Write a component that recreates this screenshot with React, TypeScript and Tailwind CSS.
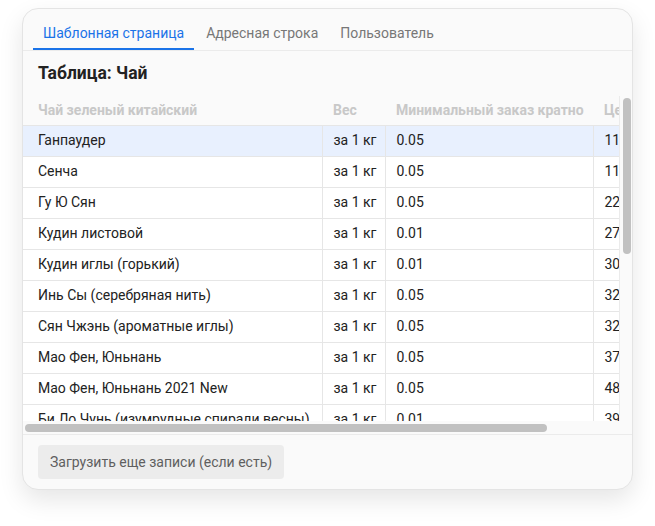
import { useState } from 'react'

type TeaRow = {
  name: string
  weight: string
  minOrder: string
  price: string
}

const rows: TeaRow[] = [
  { name: 'Ганпаудер', weight: 'за 1 кг', minOrder: '0.05', price: '1100' },
  { name: 'Сенча', weight: 'за 1 кг', minOrder: '0.05', price: '1150' },
  { name: 'Гу Ю Сян', weight: 'за 1 кг', minOrder: '0.05', price: '2200' },
  { name: 'Кудин листовой', weight: 'за 1 кг', minOrder: '0.01', price: '2700' },
  { name: 'Кудин иглы (горький)', weight: 'за 1 кг', minOrder: '0.01', price: '3000' },
  { name: 'Инь Сы (серебряная нить)', weight: 'за 1 кг', minOrder: '0.05', price: '3200' },
  { name: 'Сян Чжэнь (ароматные иглы)', weight: 'за 1 кг', minOrder: '0.05', price: '3250' },
  { name: 'Мао Фен, Юньнань', weight: 'за 1 кг', minOrder: '0.05', price: '3700' },
  { name: 'Мао Фен, Юньнань 2021 New', weight: 'за 1 кг', minOrder: '0.05', price: '4800' },
  { name: 'Би Ло Чунь (изумрудные спирали весны)', weight: 'за 1 кг', minOrder: '0.01', price: '3900' },
  { name: 'Лун Цзин (колодец дракона)', weight: 'за 1 кг', minOrder: '0.05', price: '5200' },
  { name: 'Тай Пин Хоу Куй', weight: 'за 1 кг', minOrder: '0.05', price: '6100' },
  { name: 'Хуан Шань Мао Фэн', weight: 'за 1 кг', minOrder: '0.05', price: '4300' },
  { name: 'Люань Гуа Пянь', weight: 'за 1 кг', minOrder: '0.05', price: '4700' },
  { name: 'Синь Ян Мао Цзянь', weight: 'за 1 кг', minOrder: '0.05', price: '3600' },
  { name: 'Чжу Е Цин', weight: 'за 1 кг', minOrder: '0.05', price: '5900' },
  { name: 'Ань Цзи Бай Ча', weight: 'за 1 кг', minOrder: '0.05', price: '6400' },
  { name: 'Моли Хуа Ча (жасминовый)', weight: 'за 1 кг', minOrder: '0.05', price: '2100' },
  { name: 'Жасминовые жемчужины', weight: 'за 1 кг', minOrder: '0.05', price: '4900' },
  { name: 'Цзюнь Шань Инь Чжэнь', weight: 'за 1 кг', minOrder: '0.01', price: '8800' }
]

const tabs = ['Шаблонная страница', 'Адресная строка', 'Пользователь']

export default function App() {
  const [activeTab, setActiveTab] = useState(0)
  const [selected, setSelected] = useState(0)

  return (
    <div className="w-[655px] h-[526px] bg-white pt-[8px] pl-[22px] font-['Roboto',sans-serif]">
      <div className="w-[611px] h-[482px] flex flex-col overflow-hidden rounded-[16px] border border-[#e4e4e4] bg-[#fafafa] shadow-[0_10px_24px_rgba(0,0,0,0.10)]">
        {/* Tabs */}
        <div className="flex gap-[2px] pl-[10px] pt-[8px] border-b border-[#ebebeb]">
          {tabs.map((tab, i) => (
            <button
              key={tab}
              onClick={() => setActiveTab(i)}
              className={`h-[33px] px-[10px] pt-[1px] text-[14px] border-b-2 ${
                activeTab === i
                  ? 'text-[#1a73e8] border-[#1a73e8]'
                  : 'text-[#777777] border-transparent'
              }`}
            >
              {tab}
            </button>
          ))}
        </div>

        <h2 className="pl-[15px] pt-[11px] pb-[12px] text-[17.5px] leading-[22px] font-bold text-[#222222]">
          Таблица: Чай
        </h2>

        {/* Table viewport with its scrollbars */}
        <div className="flex-1 min-h-0 grid grid-cols-[1fr_13px] grid-rows-[1fr_13px]">
          <div className="overflow-hidden">
            <table className="w-[676px] table-fixed border-collapse text-[14px]">
              <colgroup>
                <col className="w-[299px]" />
                <col className="w-[63px]" />
                <col className="w-[208px]" />
                <col className="w-[106px]" />
              </colgroup>
              <thead>
                <tr className="h-[29px] text-left text-[#c8c8c8]">
                  <th className="pl-[15px] pt-[1px] font-bold whitespace-nowrap">Чай зеленый китайский</th>
                  <th className="pl-[11px] pt-[1px] font-bold whitespace-nowrap">Вес</th>
                  <th className="pl-[11px] pt-[1px] font-bold whitespace-nowrap">Минимальный заказ кратно</th>
                  <th className="pl-[11px] pt-[1px] font-bold whitespace-nowrap">Цена, руб.</th>
                </tr>
              </thead>
              <tbody className="text-[#222222]">
                {rows.map((row, i) => (
                  <tr
                    key={row.name}
                    onClick={() => setSelected(i)}
                    className={`h-[31px] ${selected === i ? 'bg-[#e8f0fe]' : 'bg-white'}`}
                  >
                    <td className="pl-[15px] border-t border-r border-[#e6e6e6] whitespace-nowrap overflow-hidden">{row.name}</td>
                    <td className="pl-[11px] border-t border-r border-[#e6e6e6] whitespace-nowrap">{row.weight}</td>
                    <td className="pl-[11px] border-t border-r border-[#e6e6e6] whitespace-nowrap">{row.minOrder}</td>
                    <td className="pl-[11px] border-t border-[#e6e6e6] whitespace-nowrap">{row.price}</td>
                  </tr>
                ))}
              </tbody>
            </table>
          </div>

          {/* vertical scrollbar */}
          <div className="border-l border-[#ebebeb] pl-[3px] pt-[2px]">
            <div className="w-[8px] h-[156px] rounded-full bg-[#c1c1c1]" />
          </div>

          {/* horizontal scrollbar */}
          <div className="pl-[2px] pt-[3px]">
            <div className="w-[522px] h-[8px] rounded-full bg-[#c1c1c1]" />
          </div>
          <div />
        </div>

        {/* Footer */}
        <div className="border-t border-[#ebebeb] px-[15px] py-[10px]">
          <button className="h-[34px] px-[12px] rounded-[4px] bg-[#ececec] text-[14px] text-[#5f5f5f]">
            Загрузить еще записи (если есть)
          </button>
        </div>
      </div>
    </div>
  )
}
